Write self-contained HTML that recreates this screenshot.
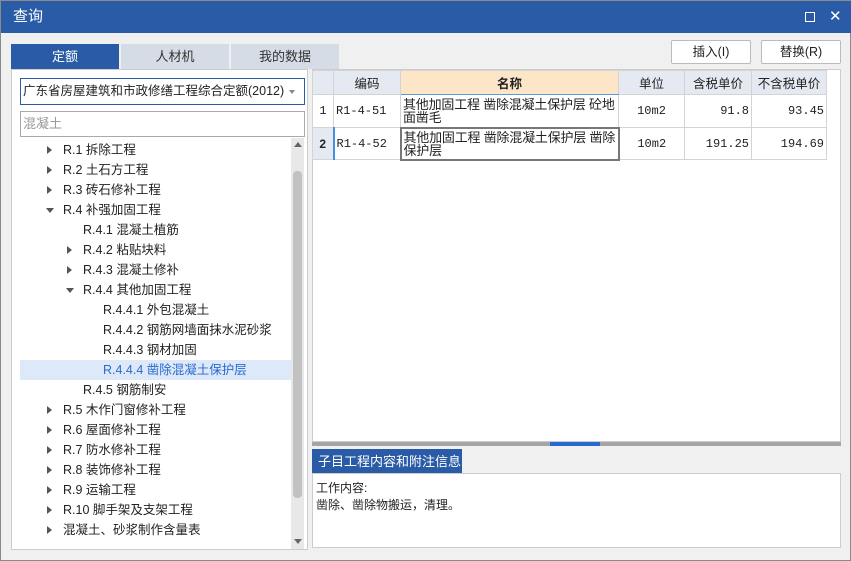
<html><head><style>
*{margin:0;padding:0;box-sizing:border-box}
body{width:851px;height:561px;background:#f0f0f0;font-family:"Liberation Sans","Noto Sans CJK SC",sans-serif;font-size:12px;color:#222;position:relative;overflow:hidden;border:1px solid #8a8a8a}
.a{position:absolute}
.title{left:0;top:0;width:851px;height:32px;background:#2a5ba6;color:#fff;font-size:15px;line-height:32px;padding-left:12px}
.tab{top:43px;height:25px;width:108px;text-align:center;line-height:25px;font-size:13px;background:#d6dce6;color:#333}
.tree div{position:absolute;height:20px;line-height:20px;font-size:12.5px;white-space:nowrap}
.tri{position:absolute;width:0;height:0;border-top:4px solid transparent;border-bottom:4px solid transparent;border-left:5px solid #555}
.trid{position:absolute;width:0;height:0;border-left:4px solid transparent;border-right:4px solid transparent;border-top:5px solid #555}
table{border-collapse:collapse;font-size:12px;table-layout:fixed;width:514px}
td{border:1px solid #d4d4d4;padding:0 2px;overflow:hidden}
.btn{top:39px;width:80px;height:24px;background:#fff;border:1px solid #bbb;border-radius:2px;text-align:center;line-height:22px;font-size:12.5px}
.mono{font-family:"Liberation Mono","Noto Sans CJK SC",monospace;font-size:12px}
.nm{font-size:13px;line-height:13px;letter-spacing:-0.2px}
</style></head><body>
<div class="a title">查询</div>
<div class="a" style="left:804px;top:11px;width:10px;height:10px;border:1.5px solid #fff"></div>
<div class="a" style="left:828px;top:6px;color:#fff;font-size:15px">✕</div>
<div class="a tab" style="left:10px;background:#2a5ba6;color:#fff">定额</div>
<div class="a tab" style="left:120px">人材机</div>
<div class="a tab" style="left:230px">我的数据</div>
<div class="a btn" style="left:670px">插入(I)</div>
<div class="a btn" style="left:760px">替换(R)</div>
<div class="a" style="left:10px;top:68px;width:297px;height:481px;background:#fff;border:1px solid #ccc"></div>
<div class="a" style="left:19px;top:77px;width:285px;height:27px;border:1px solid #2a5ba6;background:#fff;line-height:25px;padding-left:2px;font-size:12.5px;white-space:nowrap;overflow:hidden">广东省房屋建筑和市政修缮工程综合定额(2012)</div>
<div class="a" style="left:288px;top:89px;width:0;height:0;border-left:3px solid transparent;border-right:3px solid transparent;border-top:4px solid #888"></div>
<div class="a" style="left:19px;top:110px;width:285px;height:26px;border:1px solid #aaa;background:#fff;line-height:24px;padding-left:2px;color:#999;font-size:13px">混凝土</div>
<div class="a" style="left:290px;top:137px;width:13px;height:411px;background:#e8e8e8"></div>
<div class="a" style="left:292px;top:170px;width:9px;height:327px;background:#c2c2c2;border-radius:4px"></div>
<div class="a" style="left:293px;top:141px;border-left:4px solid transparent;border-right:4px solid transparent;border-bottom:5px solid #666"></div>
<div class="a" style="left:293px;top:538px;border-left:4px solid transparent;border-right:4px solid transparent;border-top:5px solid #666"></div>
<div class="a" style="left:19px;top:359px;width:271px;height:20px;background:#dde8f8"></div>
<div class="a tree" style="left:0;top:0">
<div style="left:62px;top:139px">R.1 拆除工程</div><span class="tri" style="left:46px;top:145px"></span>
<div style="left:62px;top:159px">R.2 土石方工程</div><span class="tri" style="left:46px;top:165px"></span>
<div style="left:62px;top:179px">R.3 砖石修补工程</div><span class="tri" style="left:46px;top:185px"></span>
<div style="left:62px;top:199px">R.4 补强加固工程</div><span class="trid" style="left:45px;top:207px"></span>
<div style="left:82px;top:219px">R.4.1 混凝土植筋</div>
<div style="left:82px;top:239px">R.4.2 粘贴块料</div><span class="tri" style="left:66px;top:245px"></span>
<div style="left:82px;top:259px">R.4.3 混凝土修补</div><span class="tri" style="left:66px;top:265px"></span>
<div style="left:82px;top:279px">R.4.4 其他加固工程</div><span class="trid" style="left:65px;top:287px"></span>
<div style="left:102px;top:299px">R.4.4.1 外包混凝土</div>
<div style="left:102px;top:319px">R.4.4.2 钢筋网墙面抹水泥砂浆</div>
<div style="left:102px;top:339px">R.4.4.3 钢材加固</div>
<div style="left:102px;top:359px;color:#2a6ad0">R.4.4.4 凿除混凝土保护层</div>
<div style="left:82px;top:379px">R.4.5 钢筋制安</div>
<div style="left:62px;top:399px">R.5 木作门窗修补工程</div><span class="tri" style="left:46px;top:405px"></span>
<div style="left:62px;top:419px">R.6 屋面修补工程</div><span class="tri" style="left:46px;top:425px"></span>
<div style="left:62px;top:439px">R.7 防水修补工程</div><span class="tri" style="left:46px;top:445px"></span>
<div style="left:62px;top:459px">R.8 装饰修补工程</div><span class="tri" style="left:46px;top:465px"></span>
<div style="left:62px;top:479px">R.9 运输工程</div><span class="tri" style="left:46px;top:485px"></span>
<div style="left:62px;top:499px">R.10 脚手架及支架工程</div><span class="tri" style="left:46px;top:505px"></span>
<div style="left:62px;top:519px">混凝土、砂浆制作含量表</div><span class="tri" style="left:46px;top:525px"></span>
</div>
<div class="a" style="left:311px;top:68px;width:529px;height:373px;background:#fff;border:1px solid #ccc"></div>
<table class="a" style="left:311px;top:69px">
<colgroup><col style="width:21px"><col style="width:67px"><col style="width:218px"><col style="width:66px"><col style="width:67px"><col style="width:75px"></colgroup>
<tr style="height:24px;background:#e4e9f2;text-align:center;font-size:12.5px"><td></td><td>编码</td><td style="background:#fde6c8;font-weight:bold;border-bottom:1px solid #5a9ae0">名称</td><td>单位</td><td>含税单价</td><td>不含税单价</td></tr>
<tr style="height:33px"><td style="text-align:center;background:#fff" class="mono">1</td><td class="mono">R1-4-51</td><td class="nm">其他加固工程 凿除混凝土保护层 砼地面凿毛</td><td class="mono" style="text-align:center">10m2</td><td class="mono" style="text-align:right">91.8</td><td class="mono" style="text-align:right">93.45</td></tr>
<tr style="height:32px"><td style="text-align:center;background:#e4e9f2;font-weight:bold;border-right:2px solid #4a90e2">2</td><td class="mono">R1-4-52</td><td class="nm" style="border:2px solid #777">其他加固工程 凿除混凝土保护层 凿除保护层</td><td class="mono" style="text-align:center">10m2</td><td class="mono" style="text-align:right">191.25</td><td class="mono" style="text-align:right">194.69</td></tr>
</table>
<div class="a" style="left:311px;top:441px;width:529px;height:4px;background:#a5a5a5"></div>
<div class="a" style="left:549px;top:441px;width:50px;height:4px;background:#2a6ad0"></div>
<div class="a" style="left:311px;top:448px;width:150px;height:25px;background:#2a5ba6;color:#fff;font-size:13px;line-height:25px;padding-left:6px">子目工程内容和附注信息</div>
<div class="a" style="left:311px;top:472px;width:529px;height:75px;background:#fff;border:1px solid #ccc;padding:6px 3px;line-height:17px;font-size:12px">工作内容:<br>凿除、凿除物搬运，清理。</div>
</body></html>
